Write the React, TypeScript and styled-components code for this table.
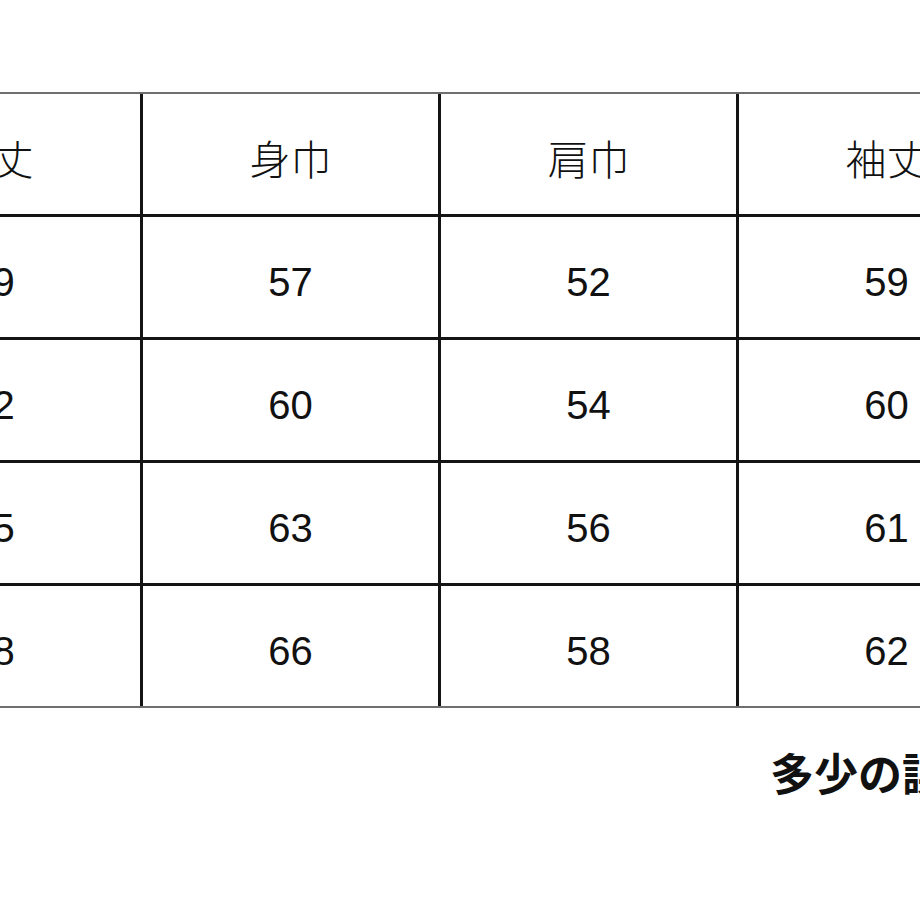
import React from 'react';
import styled, {createGlobalStyle} from 'styled-components';

const rows: string[][] = [
  ['着丈', '身巾', '肩巾', '袖丈'],
  ['69', '57', '52', '59'],
  ['72', '60', '54', '60'],
  ['75', '63', '56', '61'],
  ['78', '66', '58', '62'],
];

const GlobalStyle = createGlobalStyle`
  html, body {
    margin: 0;
    padding: 0;
    background: #fff;
    overflow: hidden;
  }
`;

const Page = styled.div`
  width: 920px;
  height: 920px;
  overflow: hidden;
  padding-top: 92px;
  box-sizing: border-box;
`;

// the table is cut at both sides in the shot, so it starts left of the page
const SizeGrid = styled.div`
  display: grid;
  grid-template-columns: repeat(4, 295px);
  grid-auto-rows: 120px;
  gap: 3px;
  width: max-content;
  margin-left: -155px;
  background: #141414;
  border-top: 2px solid #6f6f6f;
  border-bottom: 2px solid #6f6f6f;
`;

const Cell = styled.div<{$head?: boolean}>`
  background: #fff;
  display: flex;
  align-items: center;
  justify-content: center;
  color: #111;
  box-sizing: border-box;
  padding-top: ${p => p.$head ? '6px' : '10px'};
  font-family: ${p => p.$head
    ? '"Noto Sans CJK JP", "Liberation Sans", sans-serif'
    : '"Liberation Sans", Arial, sans-serif'};
  font-size: ${p => p.$head ? '41px' : '40px'};
  font-weight: ${p => p.$head ? 300 : 400};
`;

const Note = styled.div`
  margin: 42px 0 0 770px;
  font-family: "Noto Sans CJK JP", sans-serif;
  font-weight: 700;
  font-size: 44px;
  line-height: 44px;
  white-space: nowrap;
  color: #111;
`;

export default function App() {
  return <Page>
    <GlobalStyle/>
    <SizeGrid>
      {rows.map((row, r) => row.map((v, c) =>
        <Cell key={`${r}-${c}`} $head={r === 0}>{v}</Cell>
      ))}
    </SizeGrid>
    <Note>多少の誤差はご了承ください。</Note>
  </Page>;
}
